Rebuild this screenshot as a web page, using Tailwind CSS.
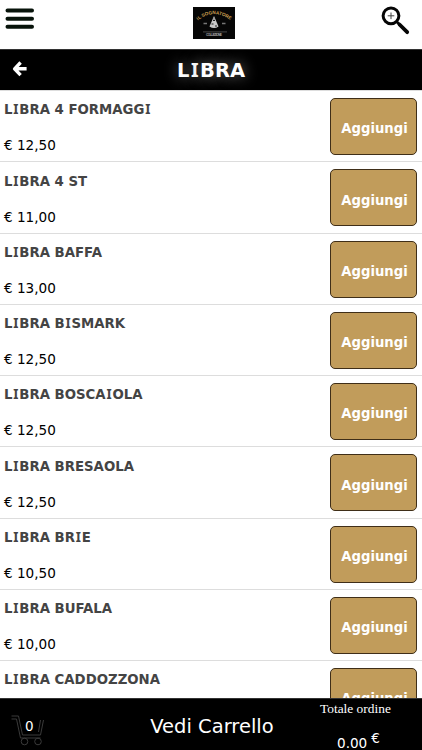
<!DOCTYPE html>
<html lang="it">
<head>
    <meta charset="UTF-8">
    <meta name="viewport" content="width=device-width, initial-scale=1.0">
    <title>Libra</title>
    <script src="https://cdn.jsdelivr.net/npm/@tailwindcss/browser@4"></script>
</head>
<body class="bg-white font-['Verdana','DejaVu_Sans',sans-serif]">
<div class="flex flex-col h-[750px] w-full overflow-hidden">

    <!-- Top bar -->
    <header class="flex shrink-0 items-start justify-between h-[49px] pl-[5px] pr-3">
        <svg class="mt-2 w-[30px] h-[22px]" viewBox="0 0 30 22" stroke="#07130a" stroke-width="4" stroke-linecap="round">
            <path d="M2.5 2.5H27M2.5 10.7H27M2.5 18.8H27"/>
        </svg>
        <svg class="mt-[7px] ml-[11px] w-[42px] h-8" viewBox="0 0 42 32">
            <rect width="42" height="32" fill="#060606"/>
            <path id="arc" d="M5 13.5Q21 0 40 15" fill="none"/>
            <text font-family="Liberation Sans" font-size="4.7" font-weight="bold" fill="#d0a252"><textPath href="#arc">IL SOGNATORE</textPath></text>
            <path d="M21 9L16.5 19.5Q21 22.5 25.5 19.5Z" fill="#c9c9c9"/>
            <path d="M20 13.5h2M18.5 17h2M22 19h2M21 11.5v1" stroke="#222" stroke-width="1"/>
            <path d="M10.5 16.5h3.5M29 16.5h3.5" stroke="#777" stroke-width="1.4"/>
            <path d="M10 24.9h24" stroke="#777" stroke-width=".6"/>
            <text x="13" y="29.3" font-family="Liberation Sans" font-size="3.3" font-weight="bold" fill="#aaa" textLength="16">COLLEZIONE</text>
        </svg>
        <svg class="mt-[6px] w-[29px] h-[29px]" viewBox="0 0 29 29" fill="none" stroke="#050505">
            <circle cx="10" cy="9.8" r="7.9" stroke-width="3"/>
            <path d="M15.5 15.5l3 3" stroke-width="2.5"/>
            <path d="M18.5 18.5l7.7 7.7" stroke-width="3.8" stroke-linecap="round"/>
            <path d="M10 6.5v6.6M6.7 9.8h6.6" stroke="#444" stroke-width="1"/>
        </svg>
    </header>

    <!-- Category title -->
    <div class="flex shrink-0 items-center h-[41px] bg-black border-t border-[#333] px-3">
        <svg class="w-[15px] h-[16px] -mt-[2px]" viewBox="0 0 15 16" fill="none" stroke="#fff" stroke-width="3.4" stroke-linejoin="round">
            <path d="M8.6 1.5L2.6 7.8L8.6 14.2M3 7.8H14.6"/>
        </svg>
        <h1 class="flex-1 text-center text-white font-bold text-[19.5px] leading-none pt-px pr-[15px] [text-shadow:0_0_14px_#777]">L<span class="px-[1.5px] font-['Noto_Sans',sans-serif] leading-none">I</span>BRA</h1>
    </div>

    <!-- Products -->
    <main id="products" class="flex-1 min-h-0 overflow-hidden border-t border-[#ddd]"></main>

    <!-- Cart bar -->
    <footer class="flex shrink-0 h-[52px] bg-black border-t border-[#333] text-white">
        <div class="relative w-[120px]">
            <svg class="absolute left-[11px] top-4 w-[34px] h-[31px]" viewBox="0 0 34 31" fill="none" stroke="#3a3a3a" stroke-width="1">
                <path d="M.5 1h7l4 19h18M.5 4h5l4 19h20M29.5 20l3-15M27.5 17l2-12"/>
                <circle cx="13.5" cy="26.5" r="3.3"/>
                <circle cx="27" cy="26.5" r="3.3"/>
            </svg>
            <span class="absolute left-[25px] top-[19px] text-[13.5px] leading-4">0</span>
        </div>
        <div class="w-[184px] pt-4 text-center text-[19.5px] leading-6 whitespace-nowrap">Vedi Carrello</div>
        <div class="flex-1 pl-4">
            <div class="font-['Liberation_Serif',serif] text-[13.4px] leading-4 pt-[2px] whitespace-nowrap">Totale ordine</div>
            <div class="flex items-start pl-[17px] pt-[13px] text-[13.6px] leading-4">
                <span class="pt-[5px]">0.00</span>
                <span class="ml-1">€</span>
            </div>
        </div>
    </footer>
</div>

<script>
    const products = [
        ['LIBRA 4 FORMAGGI', '12,50'],
        ['LIBRA 4 ST', '11,00'],
        ['LIBRA BAFFA', '13,00'],
        ['LIBRA BISMARK', '12,50'],
        ['LIBRA BOSCAIOLA', '12,50'],
        ['LIBRA BRESAOLA', '12,50'],
        ['LIBRA BRIE', '10,50'],
        ['LIBRA BUFALA', '10,00'],
        ['LIBRA CADDOZZONA', '12,50'],
    ];

    // capital I with serifs
    const serifI = name => name.replace(/I/g, `<span class="px-[0.8px] font-['Noto_Sans',sans-serif]">I</span>`);

    document.getElementById('products').innerHTML = products.map(([name, price]) => `
        <div class="flex justify-between h-[71.25px] border-b border-[#ddd] pl-1 pr-[5px]">
            <div class="pt-[10.4px]">
                <h2 class="h-4 font-bold text-[13.3px] leading-4 text-[#444]">${serifI(name)}</h2>
                <p class="pt-5 text-[13.6px] leading-4 text-black">€ ${price}</p>
            </div>
            <button class="mt-[7px] w-[87px] h-[57px] rounded-[5px] border border-[#3f2e18] bg-[#c19c5b] pl-[2px] pt-[5.5px] text-white font-bold text-[13.2px]">Aggiungi</button>
        </div>`).join('');
</script>
</body>
</html>
